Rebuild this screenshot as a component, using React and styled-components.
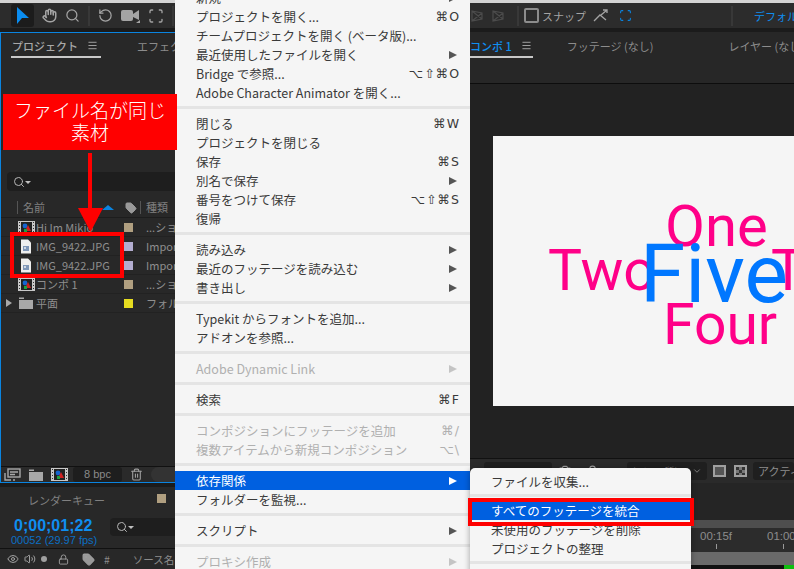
import React from 'react'
import styled, { createGlobalStyle } from 'styled-components'
import { Hand, Search, RotateCcw, Scan, Trash2, Eye, Volume2, Lock, Tag, Menu as MenuIcon, ChevronDown, Camera } from 'lucide-react'

const Global = createGlobalStyle`
  html, body { margin: 0; padding: 0; background: #222; }
  body { font-family: "Noto Sans CJK JP", "Liberation Sans", sans-serif; }
  svg { flex-shrink: 0; }
`

const Screen = styled.div`
  position: relative;
  width: 794px;
  height: 569px;
  overflow: hidden;
  display: grid;
  grid-template-columns: 175px 295px 324px;
  background: #1b1b1b;
`

const Column = styled.div`
  display: flex;
  flex-direction: column;
  height: 569px;
  min-width: 0;
  overflow: hidden;
`

const Toolbar = styled.div`
  height: 25px;
  flex: none;
  display: flex;
  align-items: center;
  gap: ${p => p.$gap || 8}px;
  background: #2c2c2c;
  border-top: 3px solid #d4d4d4;
  color: #a4a4a4;
  margin-bottom: 4px;
  white-space: nowrap;
`

const ToolActive = styled.div`
  width: 23px;
  height: 23px;
  display: flex;
  align-items: center;
  justify-content: center;
  background: #1c1c1c;
  border-radius: 3px;
  margin-left: 11px;
  flex: none;
`

const Divider = styled.div`
  width: 2px;
  height: 20px;
  flex: none;
  background: #383838;
  margin-left: ${p => p.$left || 0}px;
`

const Check = styled.span`
  width: 11px;
  height: 11px;
  flex: none;
  border: 2px solid #8c8c8c;
  border-radius: 2px;
  margin-left: -2px;
`

const SnapLabel = styled.span`
  font-size: 11px;
  color: #a4a4a4;
  margin-left: -4px;
`

const WorkspaceLabel = styled.span`
  font-size: 11px;
  color: #0f8ef0;
  margin-left: 14px;
`

const SnapTarget = styled.span`
  display: flex;
  margin-left: 4px;
  color: #0a84e0;
`

const Panel = styled.div`
  height: 449px;
  flex: none;
  display: flex;
  flex-direction: column;
  background: #282828;
  border: solid #0a84e0;
  border-width: 1px 0 1px 1px;
`

const TabBar = styled.div`
  height: 23px;
  flex: none;
  display: flex;
  align-items: flex-start;
  padding: 2px 0 0 ${p => p.$left || 0}px;
  white-space: nowrap;
`

const Tab = styled.div`
  display: flex;
  align-items: center;
  gap: 9px;
  height: 21px;
  padding: 0 ${p => p.$padRight || 0}px 0 ${p => p.$padLeft || 0}px;
  margin-right: ${p => p.$after || 0}px;
  font-size: 11px;
  font-weight: ${p => (p.$active ? 500 : 400)};
  color: ${p => p.$color || '#8c8c8c'};
  border-bottom: ${p => (p.$active ? '2px solid #c8c8c8' : '2px solid transparent')};
`

const Spacer = styled.div`
  height: ${p => p.$h}px;
  flex: none;
`

const SearchField = styled.div`
  height: 19px;
  margin-left: 6px;
  background: #1e1e1e;
  border-radius: 4px 0 0 4px;
  display: flex;
  align-items: center;
  padding-left: 6px;
  flex: none;
  color: #b5b5b5;
`

const SearchCaret = styled.span`
  width: 0;
  height: 0;
  border: 3px solid transparent;
  border-top: 3px solid #c0c0c0;
  margin: 4px 0 0 0;
`

const HeaderRow = styled.div`
  height: 19px;
  margin-top: 7px;
  display: flex;
  align-items: center;
  font-size: 11px;
  color: #808080;
  border-bottom: 1px solid #1d1d1d;
  flex: none;
  position: relative;
`

const HeaderCell = styled.div`
  width: ${p => p.$w}px;
  flex: none;
  height: 13px;
  line-height: 13px;
  border-left: ${p => (p.$line ? '1px solid #555' : 'none')};
  padding-left: 5px;
  box-sizing: border-box;
  display: flex;
  align-items: center;
`

const SortArrow = styled.span`
  position: absolute;
  left: 101px;
  top: 7px;
  width: 0;
  height: 0;
  border: 6px solid transparent;
  border-top: 0;
  border-bottom: 5px solid #0a84e0;
`

const FileList = styled.div`
  flex: 1;
  display: flex;
  flex-direction: column;
`

const FileRow = styled.div`
  height: 19px;
  flex: none;
  display: flex;
  align-items: center;
  font-size: 11px;
  color: #8f8f8f;
  white-space: nowrap;
  border-bottom: 1px solid #222;
  box-sizing: border-box;
`

const RowTwist = styled.span`
  width: 17px;
  flex: none;
  padding-left: 5px;
  box-sizing: border-box;
  display: flex;
`

const Twist = styled.span`
  width: 0;
  height: 0;
  border: 4px solid transparent;
  border-left: 6px solid #a8a8a8;
  border-right: 0;
`

const RowIcon = styled.span`
  width: 18px;
  flex: none;
  display: flex;
  align-items: center;
  justify-content: center;
  padding-right: 2px;
  box-sizing: border-box;
`

const RowName = styled.span`
  width: 88px;
  flex: none;
  overflow: hidden;
`

const Swatch = styled.span`
  width: 9px;
  height: 9px;
  flex: none;
  background: ${p => p.$c};
  margin-right: 13px;
`

const RowKind = styled.span`
  flex: 1;
  overflow: hidden;
`

const PanelBottom = styled.div`
  height: 15px;
  flex: none;
  display: flex;
  align-items: center;
  gap: 8px;
  padding-left: 3px;
  background: #2a2a2a;
  border-top: 1px solid #111;
  color: #a0a0a0;
`

const Bpc = styled.div`
  width: 49px;
  height: 15px;
  flex: none;
  margin-left: -3px;
  background: #1e1e1e;
  border-radius: 3px;
  font: 11px/15px "Liberation Sans", sans-serif;
  text-align: center;
  color: #8a8a8a;
`

const Pill = styled.div`
  flex: 1;
  height: 15px;
  border-radius: 8px 0 0 8px;
  background: #333;
`

const QueuePanel = styled.div`
  flex: 1;
  margin-top: 4px;
  background: #282828;
  display: flex;
  flex-direction: column;
`

const QueueHead = styled.div`
  height: 26px;
  flex: none;
  display: flex;
  align-items: center;
  padding-left: 28px;
  font-size: 11px;
  color: #808080;
  position: relative;
`

const QueueSwatch = styled.span`
  position: absolute;
  left: 157px;
  top: 7px;
  width: 9px;
  height: 9px;
  background: #b09f80;
`

const TimeRow = styled.div`
  display: flex;
  height: 35px;
  flex: none;
  padding-left: 11px;
  gap: 12px;
`

const TimeBlock = styled.div`
  display: flex;
  flex-direction: column;
  width: 87px;
  flex: none;
  padding-top: 3px;
`

const TimeCode = styled.div`
  font: bold 16px/19px "Liberation Sans", sans-serif;
  color: #0f8ef0;
  margin-left: 3px;
`

const Frames = styled.div`
  font: 11px/11px "Liberation Sans", sans-serif;
  color: #0b6fc4;
  white-space: nowrap;
`

const QueueSearch = styled(SearchField)`
  margin: 5px 0 0;
  flex: 1;
  height: 18px;
`

const ColumnsRow = styled.div`
  flex: 1;
  border-top: 1px solid #111;
  display: flex;
  align-items: center;
  gap: 5px;
  padding-left: 7px;
  color: #a0a0a0;
  font-size: 10.5px;
  white-space: nowrap;
`

const SoloDot = styled.span`
  width: 6px;
  height: 6px;
  flex: none;
  border-radius: 50%;
  background: #a0a0a0;
  margin-right: 6px;
`

const ColumnTag = styled.span`
  display: flex;
  margin-left: 8px;
`

const ColumnsLabel = styled.span`
  margin-left: ${p => p.$left}px;
  color: #8c8c8c;
`

const MenuPanel = styled.div`
  height: 581px;
  margin-top: -12px;
  flex: none;
  background: #f5f5f5;
  display: flex;
  flex-direction: column;
  color: #3a3a3a;
  font-size: 12.5px;
`

const MenuRow = styled.div`
  height: 19px;
  flex: none;
  display: flex;
  align-items: center;
  justify-content: space-between;
  padding: 0 10px 0 21px;
  white-space: nowrap;
  color: ${p => (p.$active ? '#fff' : p.$off ? '#b0b0b0' : '#3a3a3a')};
  background: ${p => (p.$active ? '#0060e0' : 'transparent')};
`

const Arrow = styled.span`
  width: 0;
  height: 0;
  margin-right: 3px;
  border: 4px solid transparent;
  border-left: 8px solid ${p => (p.$active ? '#fff' : p.$off ? '#c4c4c4' : '#555')};
  border-right: 0;
`

const Keys = styled.span`
  letter-spacing: 1px;
  color: ${p => (p.$off ? '#b0b0b0' : '#3a3a3a')};
  font-family: "DejaVu Sans", sans-serif;
  font-size: 12.5px;
`

const Sep = styled.div`
  height: 3px;
  margin: 4px 0 5px;
  flex: none;
  background: #e4e4e4;
`

const RightTabs = styled(TabBar)`
  border-bottom: 1px solid #0d0d0d;
  height: 52px;
  box-sizing: border-box;
  background: #272727;
  padding-top: 3px;
`

const Viewer = styled.div`
  position: relative;
  height: 374px;
  flex: none;
  background: #222;
  overflow: hidden;
`

const Comp = styled.div`
  position: absolute;
  left: 23px;
  top: 52px;
  width: 301px;
  height: 270px;
  background: #f5f5f5;
  overflow: hidden;
`

const Word = styled.span`
  position: absolute;
  left: ${p => p.$x}px;
  top: ${p => p.$y}px;
  font-family: Roboto, "Liberation Sans", sans-serif;
  font-size: ${p => p.$size}px;
  line-height: 1;
  color: ${p => p.$c};
`

const ViewerBar = styled.div`
  height: 24px;
  flex: none;
  background: #2a2a2a;
  border-top: 1px solid #111;
  display: flex;
  align-items: center;
  padding-left: 14px;
  gap: 6px;
  color: #a0a0a0;
  font-size: 10.5px;
  white-space: nowrap;
`

const ViewDrop = styled.div`
  width: ${p => p.$w}px;
  height: 18px;
  flex: none;
  box-sizing: border-box;
  padding: 0 5px;
  display: flex;
  align-items: center;
  justify-content: space-between;
  background: #1f1f1f;
  border-radius: 3px;
  color: #8c8c8c;
`

const ActiveDrop = styled(ViewDrop)`
  flex: 1;
  min-width: 0;
  overflow: hidden;
  justify-content: flex-start;
  font-size: 11px;
`

const LockSlot = styled.span`
  display: flex;
  margin-left: 8px;
`

const RedDot = styled.span`
  width: 6px;
  height: 6px;
  flex: none;
  margin: 0 5px;
  border-radius: 50%;
  background: #e01010;
`

const ViewSquare = styled.span`
  width: 13px;
  height: 12px;
  flex: none;
  box-sizing: border-box;
  border: 2px solid #a0a0a0;
  background: ${p => (p.$checker ? 'repeating-conic-gradient(#777 0 25%, #333 0 50%) 0 0 / 6px 6px' : '#555')};
  margin-left: ${p => (p.$checker ? 2 : 0)}px;
`

const Timeline = styled.div`
  flex: 1;
  background: #252525;
  display: flex;
  flex-direction: column;
  padding-left: 221px;
  padding-top: 37px;
`

const Band = styled.div`
  height: ${p => p.$h}px;
  flex: none;
  background: ${p => p.$c};
  position: relative;
  display: flex;
  gap: 35px;
  font: 11.5px "Liberation Sans", sans-serif;
  color: #8c8c8c;
  padding: 2px 0 0 9px;
  box-sizing: border-box;
  white-space: nowrap;
`

const Tick = styled.span`
  position: relative;
  &::after {
    content: '';
    position: absolute;
    left: 16px;
    top: 14px;
    width: 1px;
    height: 5px;
    background: #999;
  }
`

const GreenBit = styled.span`
  position: absolute;
  right: 0;
  top: 0;
  width: 10px;
  height: 4px;
  background: #0fbf0f;
`

const SubMenu = styled.div`
  position: absolute;
  left: 470px;
  top: 468px;
  width: 221px;
  height: 110px;
  background: #f5f5f5;
  border-radius: 5px 5px 0 0;
  box-shadow: 0 1px 6px rgba(0, 0, 0, 0.35);
  padding-top: 4px;
  box-sizing: border-box;
  font-size: 12.5px;
  display: flex;
  flex-direction: column;
`

const SubSep = styled(Sep)`
  margin: 3px 0 4px;
`

const Highlight = styled.div`
  position: absolute;
  left: 468px;
  top: 498px;
  width: 226px;
  height: 28px;
  border: 4px solid #f00;
  box-sizing: border-box;
  pointer-events: none;
`

const Callout = styled.div`
  position: absolute;
  left: 3px;
  top: 94px;
  width: 174px;
  height: 56px;
  background: #f00;
  color: #fff;
  font-size: 19px;
  font-weight: 300;
  line-height: 22px;
  text-align: center;
  padding-top: 5px;
  box-sizing: border-box;
  white-space: nowrap;
`

const RedBox = styled.div`
  position: absolute;
  left: 10px;
  top: 232px;
  width: 114px;
  height: 46px;
  border: 4px solid #f00;
  box-sizing: border-box;
`

const Pointer = styled.svg`
  position: absolute;
  left: 78px;
  top: 153px;
`

const PickIcon = () => (
  <svg width="14" height="18" viewBox="0 0 14 18"><path d="M1 0 L13 11 L6 11 L1 17 Z" fill="#0a8cf0" /></svg>
)

const CameraIcon = () => (
  <svg width="19" height="15" viewBox="0 0 19 15">
    <rect x="0" y="2" width="12" height="11" rx="2" fill="#a4a4a4" />
    <path d="M12 6 L18 2 V12 L12 9 Z" fill="#a4a4a4" />
    <path d="M15 15 H19 V12 Z" fill="#a4a4a4" />
  </svg>
)

const FaintIcon = () => (
  <svg width="14" height="14" viewBox="0 0 14 14" fill="none" stroke="#4c4c4c" strokeWidth="1.2">
    <path d="M2 2 L12 4 L12 10 L2 12 Z M2 2 L12 10 M12 4 L2 12" />
  </svg>
)

const SnapArrow = () => (
  <svg width="15" height="13" viewBox="0 0 15 13" fill="none" stroke="#a4a4a4" strokeWidth="1.3">
    <path d="M1 12 L7 6 L13 11" />
    <path d="M8 6 L14 1 M10 1 H14 V4" />
  </svg>
)

const CompIcon = () => (
  <svg width="17" height="13" viewBox="0 0 17 13">
    <rect x="0" y="0" width="17" height="13" fill="#c8c8c8" />
    <path d="M1 1 h1 v1 h-1 z M1 4 h1 v1 h-1 z M1 7 h1 v1 h-1 z M1 10 h1 v1 h-1 z M15 1 h1 v1 h-1 z M15 4 h1 v1 h-1 z M15 7 h1 v1 h-1 z M15 10 h1 v1 h-1 z" fill="#333" />
    <rect x="3" y="1" width="11" height="11" fill="#222" />
    <circle cx="7" cy="5" r="2.4" fill="#1565d0" />
    <path d="M10 4 L13 10 L7 10 Z" fill="#d02020" />
    <rect x="6" y="8" width="3" height="3" fill="#20a040" />
  </svg>
)

const FileIcon = () => (
  <svg width="12" height="15" viewBox="0 0 12 15">
    <path d="M1 0.5 H8 L11 3.5 V14.5 H1 Z" fill="#eee" />
    <rect x="3" y="7" width="6" height="5" fill="#7f97b8" />
    <rect x="4" y="8" width="2" height="2" fill="#d0d8e4" />
  </svg>
)

const FolderIcon = () => (
  <svg width="14" height="12" viewBox="0 0 14 12">
    <path d="M0 2 H5 V0.5 H0 Z M0 3 H14 V12 H0 Z" fill="#a8a8a8" />
  </svg>
)

const FootageIcon = () => (
  <svg width="17" height="13" viewBox="0 0 17 13" fill="none" stroke="#a8a8a8" strokeWidth="1.4">
    <rect x="4" y="1" width="12" height="8" />
    <path d="M6 4 H14 M6 6.5 H11" />
    <path d="M1 5 V12 H7 M9 12 H11" />
  </svg>
)

const files = [
  { name: 'Hi Im Mikio', kind: '...ション', color: '#b09f80', icon: <CompIcon /> },
  { name: 'IMG_9422.JPG', kind: 'Importe', color: '#b3add0', icon: <FileIcon /> },
  { name: 'IMG_9422.JPG', kind: 'Importe', color: '#b3add0', icon: <FileIcon /> },
  { name: 'コンポ 1', kind: '...ション', color: '#b09f80', icon: <CompIcon /> },
  { name: '平面', kind: 'フォルダ', color: '#e6dc20', icon: <FolderIcon />, twist: true },
]

const menuItems = [
  ['row', '新規', { arrow: true }],
  ['row', 'プロジェクトを開く...', { keys: '⌘O' }],
  ['row', 'チームプロジェクトを開く (ベータ版)...'],
  ['row', '最近使用したファイルを開く', { arrow: true }],
  ['row', 'Bridge で参照...', { keys: '⌥⇧⌘O' }],
  ['row', 'Adobe Character Animator を開く...'],
  ['sep'],
  ['row', '閉じる', { keys: '⌘W' }],
  ['row', 'プロジェクトを閉じる'],
  ['row', '保存', { keys: '⌘S' }],
  ['row', '別名で保存', { arrow: true }],
  ['row', '番号をつけて保存', { keys: '⌥⇧⌘S' }],
  ['row', '復帰'],
  ['sep'],
  ['row', '読み込み', { arrow: true }],
  ['row', '最近のフッテージを読み込む', { arrow: true }],
  ['row', '書き出し', { arrow: true }],
  ['sep'],
  ['row', 'Typekit からフォントを追加...'],
  ['row', 'アドオンを参照...'],
  ['sep'],
  ['row', 'Adobe Dynamic Link', { arrow: true, off: true }],
  ['sep'],
  ['row', '検索', { keys: '⌘F' }],
  ['sep'],
  ['row', 'コンポジションにフッテージを追加', { keys: '⌘/', off: true }],
  ['row', '複数アイテムから新規コンポジション', { keys: '⌥\\', off: true }],
  ['sep'],
  ['row', '依存関係', { arrow: true, active: true }],
  ['row', 'フォルダーを監視...'],
  ['sep'],
  ['row', 'スクリプト', { arrow: true }],
  ['sep'],
  ['row', 'プロキシ作成', { arrow: true, off: true }],
]

export default function App() {
  return (
    <Screen>
      <Global />
      <Column>
        <Toolbar>
          <ToolActive><PickIcon /></ToolActive>
          <Hand size={15} strokeWidth={2.4} />
          <Search size={15} />
          <Divider />
          <RotateCcw size={15} />
          <CameraIcon />
          <Scan size={16} />
          <Divider />
        </Toolbar>
        <Panel>
          <TabBar $left={10}>
            <Tab $active $padLeft={1} $padRight={3} $after={36} $color="#a8a8a8">
              プロジェクト <MenuIcon size={11} />
            </Tab>
            <Tab>エフェク</Tab>
          </TabBar>
          <Spacer $h={114} />
          <SearchField>
            <Search size={12} />
            <SearchCaret />
          </SearchField>
          <HeaderRow>
            <HeaderCell $w={16} />
            <HeaderCell $w={103} $line>名前</HeaderCell>
            <SortArrow />
            <HeaderCell $w={20}><Tag size={12} fill="#999" color="#999" /></HeaderCell>
            <HeaderCell $w={36} $line>種類</HeaderCell>
          </HeaderRow>
          <FileList>
            {files.map((f, i) => (
              <FileRow key={i}>
                <RowTwist>{f.twist && <Twist />}</RowTwist>
                <RowIcon>{f.icon}</RowIcon>
                <RowName>{f.name}</RowName>
                <Swatch $c={f.color} />
                <RowKind>{f.kind}</RowKind>
              </FileRow>
            ))}
          </FileList>
          <PanelBottom>
            <FootageIcon />
            <FolderIcon />
            <CompIcon />
            <Bpc>8 bpc</Bpc>
            <Trash2 size={13} />
            <Pill />
          </PanelBottom>
        </Panel>
        <QueuePanel>
          <QueueHead>レンダーキュー<QueueSwatch /></QueueHead>
          <TimeRow>
            <TimeBlock>
              <TimeCode>0;00;01;22</TimeCode>
              <Frames>00052 (29.97 fps)</Frames>
            </TimeBlock>
            <QueueSearch>
              <Search size={12} />
              <SearchCaret />
            </QueueSearch>
          </TimeRow>
          <ColumnsRow>
            <Eye size={12} />
            <Volume2 size={12} />
            <SoloDot />
            <Lock size={11} />
            <ColumnTag><Tag size={13} fill="#999" /></ColumnTag>
            <ColumnsLabel $left={4}>#</ColumnsLabel>
            <ColumnsLabel $left={18}>ソース名</ColumnsLabel>
          </ColumnsRow>
        </QueuePanel>
      </Column>

      <Column>
        <MenuPanel>
          {menuItems.map(([type, label, o = {}], i) =>
            type === 'sep' ? (
              <Sep key={i} />
            ) : (
              <MenuRow key={i} $off={o.off} $active={o.active}>
                <span>{label}</span>
                {o.keys && <Keys $off={o.off}>{o.keys}</Keys>}
                {o.arrow && <Arrow $off={o.off} $active={o.active} />}
              </MenuRow>
            )
          )}
        </MenuPanel>
      </Column>

      <Column>
        <Toolbar $gap={7}>
          <FaintIcon />
          <FaintIcon />
          <Divider $left={5} />
          <Check />
          <SnapLabel>スナップ</SnapLabel>
          <SnapArrow />
          <SnapTarget><Scan size={13} /></SnapTarget>
          <Divider $left={92} />
          <WorkspaceLabel>デフォルト</WorkspaceLabel>
        </Toolbar>
        <RightTabs>
          <Tab $active $padRight={1} $after={34} $color="#0f8ef0">コンポ 1 <MenuIcon size={11} color="#aaa" /></Tab>
          <Tab $after={75}>フッテージ (なし)</Tab>
          <Tab>レイヤー (なし)</Tab>
        </RightTabs>
        <Viewer>
          <Comp>
            <Word $x={55} $y={106} $size={57} $c="#ff0088">Two</Word>
            <Word $x={278} $y={106} $size={57} $c="#ff0088">T</Word>
            <Word $x={172} $y={61} $size={58} $c="#ff0088">One</Word>
            <Word $x={170} $y={160} $size={57} $c="#ff0088">Four</Word>
            <Word $x={147} $y={97} $size={82} $c="#0077ff">Five</Word>
          </Comp>
        </Viewer>
        <ViewerBar>
          <ViewDrop $w={68}>0;00;00;00</ViewDrop>
          <Camera size={14} />
          <LockSlot><Lock size={13} /></LockSlot>
          <RedDot />
          <ViewDrop $w={80}>(1/4 画質)<ChevronDown size={10} /></ViewDrop>
          <ViewSquare />
          <ViewSquare $checker />
          <ActiveDrop>アクティブ</ActiveDrop>
        </ViewerBar>
        <Timeline>
          <Band $h={8} $c="#4e4e4e" />
          <Band $h={24} $c="#2c2c2c">
            <Tick>00:15f</Tick>
            <Tick>01:00</Tick>
          </Band>
          <Band $h={13} $c="#6a6a6a" />
          <Band $h={4} $c="#111"><GreenBit /></Band>
        </Timeline>
      </Column>

      <SubMenu>
        <MenuRow>ファイルを収集...</MenuRow>
        <SubSep />
        <MenuRow $active>すべてのフッテージを統合</MenuRow>
        <MenuRow>未使用のフッテージを削除</MenuRow>
        <MenuRow>プロジェクトの整理</MenuRow>
        <SubSep />
      </SubMenu>
      <Highlight />

      <RedBox />
      <Callout>ファイル名が同じ<br />素材</Callout>
      <Pointer width="26" height="80" viewBox="0 0 26 80">
        <rect x="10" y="0" width="4" height="56" fill="#f00" />
        <path d="M0 55 H25 L12.5 79 Z" fill="#f00" />
      </Pointer>
    </Screen>
  )
}
